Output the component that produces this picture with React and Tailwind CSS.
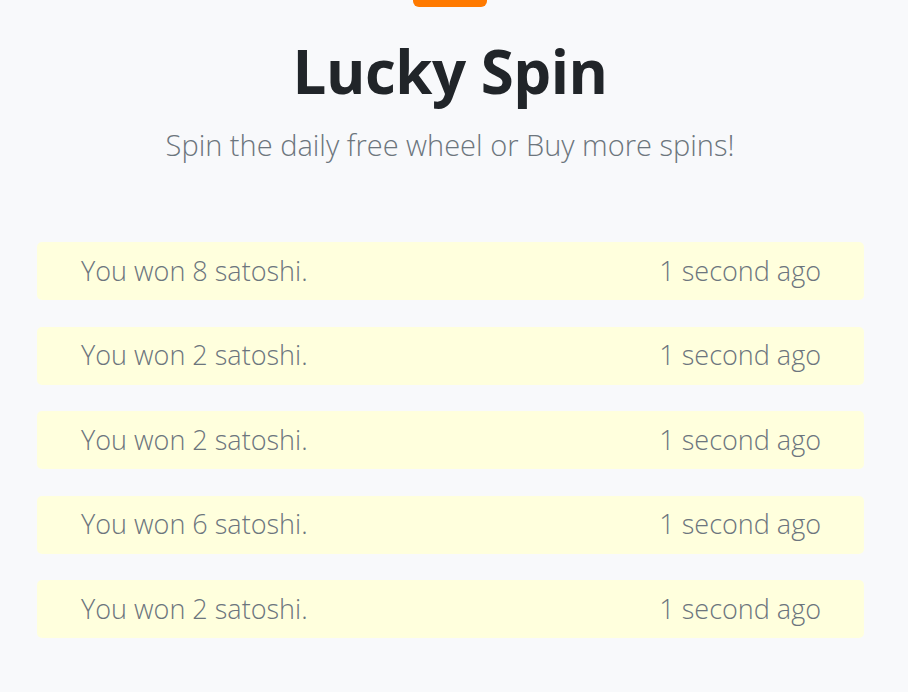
import React from 'react';

const WINS = [8, 2, 2, 6, 2];

export default function App() {
  return (
    <div className="min-h-screen w-full bg-[#f8f9fb] font-['Open_Sans',sans-serif]">
      <div className="mr-[8px]">
        <div className="flex flex-col items-center">
          <div className="h-[7px] w-[74px] rounded-b-md bg-[#ff7a00]" />
          <h1 className="mt-[27px] text-[60px] font-bold leading-[74px] text-[#212529] tracking-[-0.5px]">
            Lucky Spin
          </h1>
          <p className="mt-[17px] text-[29px] font-light leading-[40px] text-[#6c757d]">
            Spin the daily free wheel or Buy more spins!
          </p>
        </div>

        <div className="ml-[37px] mr-[36px] mt-[77px] flex flex-col gap-[26.5px]">
          {WINS.map((n, i) => (
            <div
              key={i}
              className="flex h-[58px] items-center justify-between rounded-[5px] bg-[#ffffdd] pl-[44px] pr-[43px] text-[27px] font-light text-[#6c757d]"
            >
              <span>You won {n} satoshi.</span>
              <span>1 second ago</span>
            </div>
          ))}
        </div>
      </div>
    </div>
  );
}
